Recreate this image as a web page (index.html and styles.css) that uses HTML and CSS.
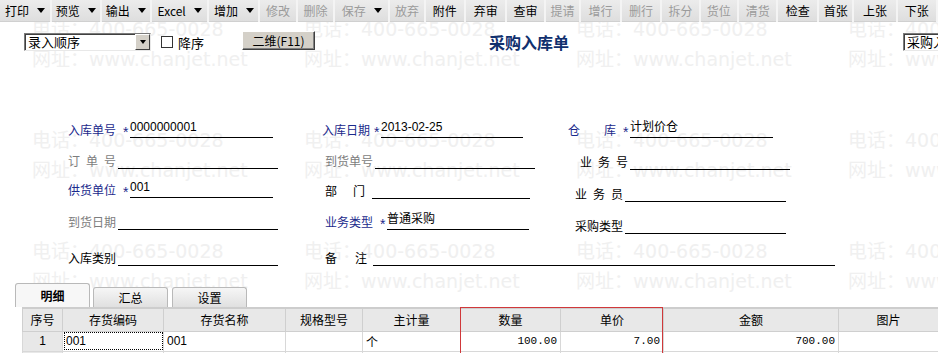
FILE: index.html
```html
<!DOCTYPE html>
<html lang="zh-CN">
<head>
    <meta charset="UTF-8">
    <title>采购入库单</title>
    <link rel="stylesheet" href="styles.css">
</head>
<body>
    <div class="page">
        <div class="watermark">
            <div class="wm"><span>电话：400-665-0028</span><span>网址：www.chanjet.net</span></div>
            <div class="wm"><span>电话：400-665-0028</span><span>网址：www.chanjet.net</span></div>
            <div class="wm"><span>电话：400-665-0028</span><span>网址：www.chanjet.net</span></div>
            <div class="wm"><span>电话：400-665-0028</span><span>网址：www.chanjet.net</span></div>
            <div class="wm"><span>电话：400-665-0028</span><span>网址：www.chanjet.net</span></div>
            <div class="wm"><span>电话：400-665-0028</span><span>网址：www.chanjet.net</span></div>
            <div class="wm"><span>电话：400-665-0028</span><span>网址：www.chanjet.net</span></div>
            <div class="wm"><span>电话：400-665-0028</span><span>网址：www.chanjet.net</span></div>
            <div class="wm"><span>电话：400-665-0028</span><span>网址：www.chanjet.net</span></div>
            <div class="wm"><span>电话：400-665-0028</span><span>网址：www.chanjet.net</span></div>
            <div class="wm"><span>电话：400-665-0028</span><span>网址：www.chanjet.net</span></div>
            <div class="wm"><span>电话：400-665-0028</span><span>网址：www.chanjet.net</span></div>
        </div>

        <div class="toolbar">
            <span class="tb-btn w52">打印<i class="caret"></i></span>
            <span class="tb-btn w50">预览<i class="caret"></i></span>
            <span class="tb-btn w50">输出<i class="caret"></i></span>
            <span class="tb-btn w58">Excel<i class="caret"></i></span>
            <span class="tb-btn w51">增加<i class="caret"></i></span>
            <span class="tb-btn off w37">修改</span>
            <span class="tb-btn off w37">删除</span>
            <span class="tb-btn off w55">保存<i class="caret"></i></span>
            <span class="tb-btn off w35">放弃</span>
            <span class="tb-btn w40">附件</span>
            <span class="tb-btn w41">弃审</span>
            <span class="tb-btn w38">查审</span>
            <span class="tb-btn off w35">提请</span>
            <span class="tb-btn off w40">增行</span>
            <span class="tb-btn off w40">删行</span>
            <span class="tb-btn off w38">拆分</span>
            <span class="tb-btn off w38">货位</span>
            <span class="tb-btn off w39">清货</span>
            <span class="tb-btn w40">检查</span>
            <span class="tb-btn w35">首张</span>
            <span class="tb-btn w43">上张</span>
            <span class="tb-btn w40">下张</span>
        </div>

        <div class="head-row">
            <div class="select order-select">
                <span class="select-text">录入顺序</span>
                <span class="select-arrow"><i class="caret"></i></span>
            </div>
            <label class="check"><span class="box"></span>降序</label>
            <span class="btn-2d">二维(F11)</span>
            <h1 class="title">采购入库单</h1>
            <div class="select type-select"><span class="select-text">采购入库单</span></div>
        </div>

        <div class="form">
            <div class="row">
                <div class="field"><span class="lbl req w55">入库单号</span><span class="star">*</span><span class="line w143">0000000001</span></div>
                <div class="field"><span class="lbl req w52">入库日期</span><span class="star">*</span><span class="line w142">2013-02-25</span></div>
                <div class="field"><span class="lbl req w55 ls24">仓库</span><span class="star">*</span><span class="line w143">计划价仓</span></div>
            </div>
            <div class="row">
                <div class="field"><span class="lbl dim w50 ls6">订单号</span><span class="line w160"></span></div>
                <div class="field in3"><span class="lbl dim w50">到货单号</span><span class="line w160"></span></div>
                <div class="field in12 up1"><span class="lbl w50 ls6">业务号</span><span class="line w160"></span></div>
            </div>
            <div class="row">
                <div class="field"><span class="lbl req w55">供货单位</span><span class="star">*</span><span class="line w143">001</span></div>
                <div class="field in3 up1"><span class="lbl w47 ls16">部门</span><span class="line w158"></span></div>
                <div class="field in7 low"><span class="lbl w50 ls6">业务员</span><span class="line w161"></span></div>
            </div>
            <div class="row">
                <div class="field"><span class="lbl dim w50">到货日期</span><span class="line w160"></span></div>
                <div class="field in3"><span class="lbl req w55">业务类型</span><span class="star">*</span><span class="line w142">普通采购</span></div>
                <div class="field in7 low"><span class="lbl w50">采购类型</span><span class="line w161"></span></div>
            </div>
            <div class="row">
                <div class="field"><span class="lbl w50">入库类别</span><span class="line w160"></span></div>
                <div class="field in3 wide"><span class="lbl w48 ls18">备注</span><span class="line w462"></span></div>
            </div>
        </div>

        <div class="tabs">
            <span class="tab active">明细</span>
            <span class="tab">汇总</span>
            <span class="tab">设置</span>
        </div>

        <div class="grid-wrap">
            <table class="grid">
                <colgroup>
                    <col class="k-no"><col class="k-code"><col class="k-name"><col class="k-spec">
                    <col class="k-unit"><col class="k-qty"><col class="k-price"><col class="k-amt"><col class="k-pic">
                </colgroup>
                <thead>
                    <tr>
                        <th>序号</th><th>存货编码</th><th>存货名称</th><th>规格型号</th><th>主计量</th>
                        <th>数量</th><th>单价</th><th>金额</th><th>图片</th>
                    </tr>
                </thead>
                <tbody>
                    <tr>
                        <td class="no">1</td>
                        <td class="focus">001</td>
                        <td>001</td>
                        <td></td>
                        <td>个</td>
                        <td class="num">100.00</td>
                        <td class="num">7.00</td>
                        <td class="num">700.00</td>
                        <td></td>
                    </tr>
                    <tr class="next">
                        <td></td><td></td><td></td><td></td><td></td><td></td><td></td><td></td><td></td>
                    </tr>
                </tbody>
            </table>
            <div class="highlight"></div>
        </div>
    </div>
</body>
</html>
```

FILE: styles.css
```css
* {
    box-sizing: border-box;
}

body {
    margin: 0;
    background-color: #fff;
    font-family: "Noto Sans CJK SC", "Liberation Sans", sans-serif;
    font-size: 12px;
    color: #000;
    overflow: hidden;
}

.page {
    position: relative;
    width: 938px;
    height: 353px;
    overflow: hidden;
}

/* watermark layer */
.watermark {
    position: absolute;
    top: 18px;
    left: 32px;
    display: grid;
    grid-template-columns: repeat(4, 272px);
    grid-auto-rows: 111px;
    z-index: 0;
    pointer-events: none;
}

.wm {
    display: flex;
    flex-direction: column;
    gap: 7px;
}

.wm span {
    font-family: "DejaVu Sans", "Noto Sans CJK SC", sans-serif;
    font-size: 19px;
    line-height: 23px;
    color: #f0f0f0;
    white-space: nowrap;
}

.toolbar,
.head-row,
.form,
.tabs,
.grid-wrap {
    position: relative;
    z-index: 1;
}

/* toolbar */
.toolbar {
    display: flex;
    height: 22px;
    background-color: #f4f4f4;
}

.tb-btn {
    display: flex;
    align-items: center;
    justify-content: center;
    gap: 8px;
    height: 22px;
    margin-right: 2px;
    background: linear-gradient(#ececec, #dedede);
    border-bottom: 1px solid #d0d0d0;
    font-size: 12px;
    white-space: nowrap;
}

.tb-btn.off {
    color: #9b9b9b;
}

.w35 { width: 35px; }
.w37 { width: 37px; }
.w38 { width: 38px; }
.w39 { width: 39px; }
.w40 { width: 40px; }
.w41 { width: 41px; }
.w43 { width: 43px; }
.w50 { width: 50px; }
.w51 { width: 51px; }
.w52 { width: 52px; }
.w55 { width: 55px; }
.w58 { width: 58px; }

.caret {
    display: inline-block;
    width: 0;
    height: 0;
    border-left: 4px solid transparent;
    border-right: 4px solid transparent;
    border-top: 5px solid #000;
}

/* header row */
.head-row {
    display: flex;
    align-items: center;
    height: 36px;
    padding-left: 24px;
    padding-top: 4px;
}

.select {
    display: flex;
    height: 18px;
    border: 1px solid;
    border-color: #7a7a7a #e8e8e8 #e8e8e8 #7a7a7a;
    background-color: #fff;
    box-shadow: inset 1px 1px 0 #404040;
}

.order-select {
    width: 127px;
}

.select-text {
    flex: 1;
    padding-left: 3px;
    font-size: 13px;
    line-height: 16px;
    white-space: nowrap;
    overflow: hidden;
}

.select-arrow {
    display: flex;
    align-items: center;
    justify-content: center;
    width: 15px;
    height: 16px;
    background-color: #d4d0c8;
    border: 1px solid;
    border-color: #fff #404040 #404040 #fff;
}

.select-arrow .caret {
    border-left-width: 3px;
    border-right-width: 3px;
    border-top-width: 4px;
}

.check {
    display: flex;
    align-items: center;
    gap: 5px;
    margin-left: 10px;
    font-size: 13px;
}

.check .box {
    width: 12px;
    height: 12px;
    border: 1px solid #333;
    background-color: #fff;
}

.btn-2d {
    display: flex;
    align-items: center;
    justify-content: center;
    width: 73px;
    height: 19px;
    margin-left: 38px;
    margin-top: -4px;
    background-color: #d4d0c8;
    border: 1px solid;
    border-color: #fff #404040 #404040 #fff;
    box-shadow: inset -1px -1px 0 #808080;
    font-size: 12px;
}

.title {
    margin: 0 0 0 174px;
    font-size: 16px;
    font-weight: bold;
    color: #10306e;
}

.type-select {
    width: 80px;
    margin-left: auto;
    margin-right: -45px;
}

/* form */
.form {
    display: grid;
    grid-template-rows: 17px 31px 29px 32px 36px;
    padding-top: 63px;
    padding-left: 68px;
}

.row {
    display: grid;
    grid-template-columns: 254px 246px 300px;
    align-items: end;
}

.field {
    display: flex;
    align-items: flex-end;
    height: 17px;
}

.field.low {
    transform: translateY(4px);
}

.field.up1 {
    transform: translateY(1px);
}

.field.wide {
    grid-column: 2 / span 2;
}

.in3 { padding-left: 3px; }
.in7 { padding-left: 7px; }
.in12 { padding-left: 12px; }

.lbl {
    flex: none;
    font-size: 12px;
    line-height: 16px;
    white-space: nowrap;
}

.lbl.req {
    color: #1b2a8c;
}

.lbl.dim {
    color: #7d7d7d;
}

.w47 { width: 47px; }
.w48 { width: 48px; }

.ls6 { letter-spacing: 6px; }
.ls16 { letter-spacing: 16px; }
.ls18 { letter-spacing: 18px; }
.ls24 { letter-spacing: 24px; }

.star {
    flex: none;
    align-self: flex-start;
    width: 7px;
    height: 12px;
    margin-top: 5px;
    color: #1b2a8c;
    font-family: "Liberation Sans", sans-serif;
    font-size: 14px;
    line-height: 12px;
    text-align: left;
}

.line {
    flex: none;
    height: 17px;
    border-bottom: 1px solid #000;
    font-size: 12px;
    line-height: 13px;
    white-space: nowrap;
    font-family: "Liberation Sans", "Noto Sans CJK SC", sans-serif;
}

.w142 { width: 142px; }
.w143 { width: 143px; }
.w158 { width: 158px; }
.w160 { width: 160px; }
.w161 { width: 161px; }
.w462 { width: 462px; }

/* tabs */
.tabs {
    display: flex;
    align-items: flex-end;
    height: 24px;
    margin-top: 17px;
    padding-left: 15px;
}

.tab {
    display: flex;
    align-items: center;
    justify-content: center;
    width: 75px;
    height: 20px;
    margin-right: 4px;
    background: linear-gradient(#f6f6f6, #e0e0e0);
    border: 1px solid #b9b9b9;
    border-bottom: none;
    border-radius: 3px 3px 0 0;
    font-size: 12px;
}

.tab.active {
    height: 24px;
    margin-right: 3px;
    background: #f7f7f7;
    font-weight: bold;
}

/* grid */
.grid-wrap {
    position: relative;
    margin-left: 22px;
    width: 916px;
}

.grid {
    border-collapse: collapse;
    table-layout: fixed;
    width: 916px;
    border-top: 2px solid #cdcdcd;
}

.k-no { width: 40px; }
.k-code { width: 101px; }
.k-name { width: 122px; }
.k-spec { width: 77px; }
.k-unit { width: 98px; }
.k-qty { width: 100px; }
.k-price { width: 103px; }
.k-amt { width: 175px; }
.k-pic { width: 100px; }

.grid th {
    height: 23px;
    background-color: #e8e8e8;
    border: 1px solid #cfcfcf;
    font-weight: normal;
    font-size: 12px;
}

.grid td {
    height: 20px;
    padding: 0 3px;
    border: 1px solid #d8d8d8;
    font-size: 12px;
    white-space: nowrap;
    font-family: "Liberation Sans", "Noto Sans CJK SC", sans-serif;
}

.grid td.no {
    background-color: #e8e8e8;
    text-align: center;
}

.grid td.focus {
    outline: 1px dotted #000;
    outline-offset: -2px;
}

.grid td.num {
    text-align: right;
    font-family: "Liberation Mono", monospace;
    font-size: 11px;
}

.grid tr.next td:first-child {
    background-color: #e8e8e8;
}

.highlight {
    position: absolute;
    top: 0;
    left: 438px;
    width: 203px;
    height: 60px;
    border: 1px solid #d0383a;
    pointer-events: none;
}
```
